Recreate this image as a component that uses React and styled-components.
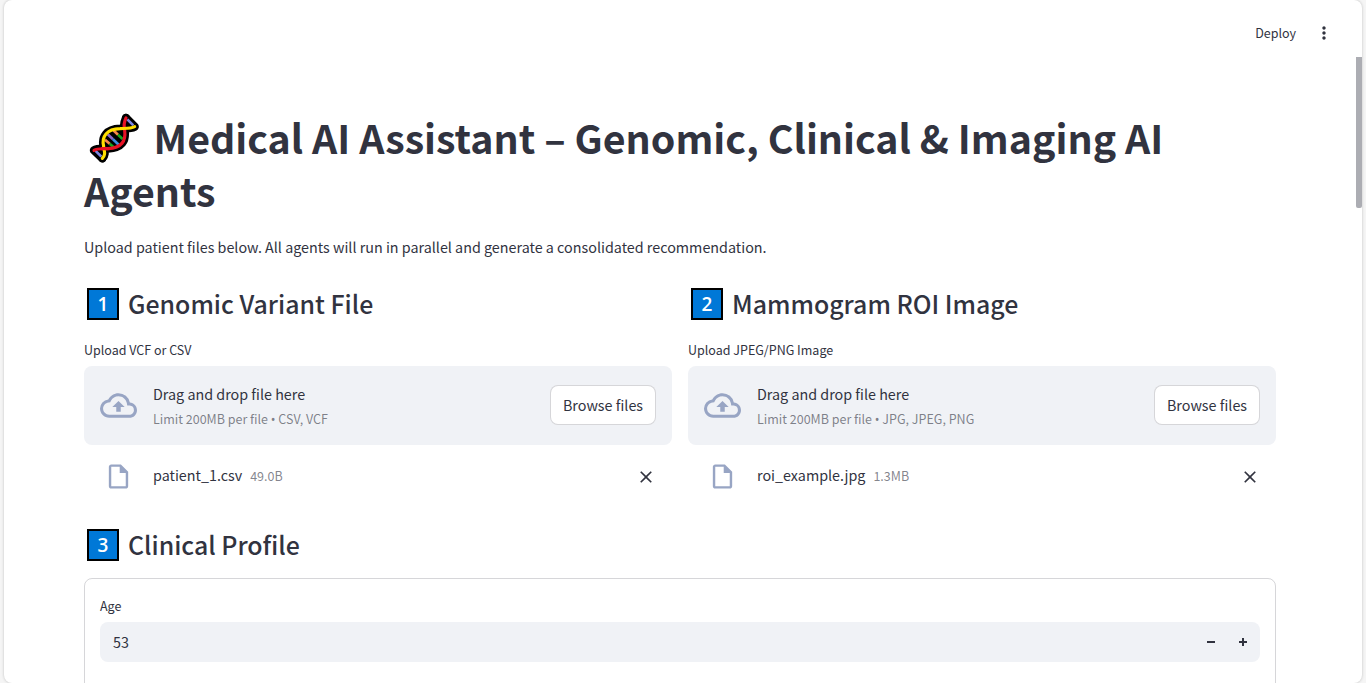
import React from "react";
import styled, { createGlobalStyle } from "styled-components";

const GlobalStyle = createGlobalStyle`
  *, *::before, *::after { box-sizing: border-box; }
  html, body { margin: 0; padding: 0; height: 100%; overflow: hidden; background: #f5f5f5; }
  body {
    font-family: "Noto Sans CJK SC", "Source Sans Pro", sans-serif;
    font-size: 14.33px;
    color: #31333f;
  }
`;

const Page = styled.div`
  height: 683px;
  padding: 0 4px 0 4px;
  overflow: hidden;
`;

const Panel = styled.main`
  height: 683px;
  background: #fff;
  border-radius: 8px;
  box-shadow: 0 0 3px rgba(0, 0, 0, 0.22);
  position: relative;
  overflow: hidden;
`;

const ScrollThumb = styled.div`
  position: absolute;
  top: 57px;
  right: 0;
  width: 6px;
  height: 151px;
  background: #acadb3;
  border-radius: 0 0 2px 2px;
`;

const Header = styled.header`
  height: 60px;
  padding: 6px 28px 0 0;
  display: flex;
  align-items: center;
  justify-content: flex-end;
  gap: 18px;
`;

const DeployButton = styled.button`
  border: 0;
  padding: 0;
  background: none;
  font: inherit;
  font-size: 12.5px;
  line-height: 20px;
  color: inherit;
`;

const Glyph = styled.svg`
  display: block;
  flex: none;
  width: ${(p) => p.$size}px;
  height: ${(p) => p.$size}px;
  fill: ${(p) => p.$color || "#31333f"};
`;

const Content = styled.div`
  padding: 50px 86px 0 80px;
`;

const Title = styled.h1`
  margin: 0;
  font-size: 39.35px;
  font-weight: 700;
  line-height: 53px;
  white-space: nowrap;
`;

const DnaIcon = styled.svg`
  width: 60px;
  height: 53px;
  margin-right: 9.6px;
  vertical-align: top;
`;

const Intro = styled.p`
  margin: 18px 0 15px;
  line-height: 26px;
`;

const Columns = styled.div`
  display: grid;
  grid-template-columns: 1fr 1fr;
  gap: 16px;
`;

const SectionTitle = styled.h2`
  margin: 0;
  height: 58px;
  padding-left: 3px;
  display: flex;
  align-items: center;
  gap: 9px;
  font-size: 24.9px;
  font-weight: 500;
  line-height: 34px;
  white-space: nowrap;
`;

const SectionText = styled.span`
  padding-bottom: 2px;
`;

const Keycap = styled.span`
  width: 32px;
  height: 32px;
  border: 2px solid #000;
  background: #0078d7;
  color: #fff;
  font: 600 19px/28px "Open Sans", sans-serif;
  text-align: center;
`;

const Upload = styled.section`
  margin: 7px 0;
`;

const Label = styled.div`
  font-size: 12.5px;
  line-height: 20px;
`;

const DropZone = styled.div`
  height: 79px;
  margin-top: 6px;
  padding: 0 16px;
  display: flex;
  align-items: center;
  background: #f0f2f6;
  border-radius: 8px;
`;

const DropText = styled.div`
  flex: 1;
  padding-left: 16px;
`;

const DropTitle = styled.div`
  line-height: 26px;
`;

const Small = styled.div`
  font-size: 12.5px;
  line-height: 23px;
  color: rgba(49, 51, 63, 0.6);
`;

const Bullet = styled.span`
  font-family: "Noto Sans", sans-serif;
  line-height: 1;
`;

const BrowseButton = styled.button`
  width: 106px;
  height: 40px;
  margin-bottom: 1px;
  padding: 0;
  border: 1px solid rgba(49, 51, 63, 0.2);
  border-radius: 8px;
  background: #fff;
  font: inherit;
  line-height: 26px;
  color: inherit;
`;

const FileRow = styled.div`
  height: 64px;
  padding: 0 16px 0 20px;
  display: flex;
  align-items: center;
`;

const FileIcon = styled(Glyph)`
  margin-bottom: 1px;
`;

const FileName = styled.div`
  padding: 0 0 4px 20px;
  margin-right: 8px;
  line-height: 26px;
`;

const FileSize = styled(Small)`
  flex: 1;
  padding-bottom: 3px;
`;

const ProfileForm = styled.form`
  height: 240px;
  margin-top: 4px;
  padding: 17px 15px;
  border: 1px solid rgba(49, 51, 63, 0.2);
  border-radius: 8px;
`;

const NumberField = styled.div`
  height: 40px;
  margin-top: 6px;
  padding: 0 13px;
  display: flex;
  align-items: center;
  gap: 24px;
  background: #f0f2f6;
  border-radius: 8px;
`;

const FieldValue = styled.span`
  flex: 1;
  line-height: 26px;
`;

const MUTED = "#98a5c4";

const Dna = () => (
  <DnaIcon viewBox="24 15 180 159" fill="none" strokeLinecap="round" strokeLinejoin="round">
    <g stroke="#000" strokeWidth="25">
      <path d="M150 39C142 55 143 64 146 76C150 108 138 128 96 131C78 132 64 130 54 136L79 160" />
      <path d="M79 160C89 150 86 142 83 127C76 95 92 72 132 71C152 70 164 71 176 65L150 39" />
    </g>
    <path d="M83 127C76 95 92 72 132 71L146 76C150 108 138 128 96 131Z" fill="#000" />
    <g strokeWidth="8" strokeLinecap="butt">
      <path d="M58 137L76 155M154 43L172 61" stroke="#7b86e2" />
      <path d="M87 104L101 116" stroke="#f7894a" />
      <path d="M101 116L113 127" stroke="#16a51d" />
      <path d="M95 88L111 103" stroke="#8967c8" />
      <path d="M111 103L128 119" stroke="#3d8de0" />
      <path d="M112 76L126 89" stroke="#f7894a" />
      <path d="M126 89L140 102" stroke="#16a51d" />
    </g>
    <path d="M150 39C142 55 143 64 146 76C150 108 138 128 96 131C78 132 64 130 54 136" stroke="#e81224" strokeWidth="9.5" />
    <path d="M79 160C89 150 86 142 83 127" stroke="#ffdf00" strokeWidth="9.5" />
    <path d="M83 124C76 95 92 72 132 71C152 70 164 71 176 65" stroke="#ffdf00" strokeWidth="9.5" />
    <path d="M78 131L96 131" stroke="#e81224" strokeWidth="9.5" />
  </DnaIcon>
);

const Uploader = ({ number, title, label, formats, file, size }) => (
  <div>
    <SectionTitle>
      <Keycap>{number}</Keycap>
      <SectionText>{title}</SectionText>
    </SectionTitle>
    <Upload>
      <Label>{label}</Label>
      <DropZone>
        <Glyph $size={37} $color={MUTED} viewBox="0 0 24 24">
          <path d="M19.35 10.04A7.49 7.49 0 0012 4C9.11 4 6.6 5.64 5.35 8.04A5.994 5.994 0 000 14c0 3.31 2.69 6 6 6h13c2.76 0 5-2.24 5-5 0-2.64-2.05-4.78-4.65-4.96zM19 18H6c-2.21 0-4-1.79-4-4 0-2.05 1.53-3.76 3.56-3.97l1.07-.11.5-.95A5.469 5.469 0 0112 6c2.62 0 4.88 1.86 5.39 4.43l.3 1.5 1.53.11A2.98 2.98 0 0122 15c0 1.65-1.35 3-3 3zM8 13h2.55v3h2.9v-3H16l-4-4z" />
        </Glyph>
        <DropText>
          <DropTitle>Drag and drop file here</DropTitle>
          <Small>
            Limit 200MB per file <Bullet>•</Bullet> {formats}
          </Small>
        </DropText>
        <BrowseButton>Browse files</BrowseButton>
      </DropZone>
      <FileRow>
        <FileIcon $size={29} $color={MUTED} viewBox="0 0 24 24">
          <path d="M14 2H6c-1.1 0-1.99.9-1.99 2L4 20c0 1.1.89 2 1.99 2H18c1.1 0 2-.9 2-2V8l-6-6zM6 20V4h7v5h5v11H6z" />
        </FileIcon>
        <FileName>{file}</FileName>
        <FileSize>{size}</FileSize>
        <Glyph $size={20} viewBox="0 0 24 24">
          <path d="M19 6.41L17.59 5 12 10.59 6.41 5 5 6.41 10.59 12 5 17.59 6.41 19 12 13.41 17.59 19 19 17.59 13.41 12z" />
        </Glyph>
      </FileRow>
    </Upload>
  </div>
);

export default function App() {
  return (
    <Page>
      <GlobalStyle />
      <Panel>
        <Header>
          <DeployButton>Deploy</DeployButton>
          <Glyph $size={20} viewBox="0 0 24 24">
            <path d="M12 8c1.1 0 2-.9 2-2s-.9-2-2-2-2 .9-2 2 .9 2 2 2zm0 2c-1.1 0-2 .9-2 2s.9 2 2 2 2-.9 2-2-.9-2-2-2zm0 6c-1.1 0-2 .9-2 2s.9 2 2 2 2-.9 2-2-.9-2-2-2z" />
          </Glyph>
        </Header>
        <Content>
          <Title>
            <Dna />
            Medical AI Assistant – Genomic, Clinical &amp; Imaging AI
            <br />
            Agents
          </Title>
          <Intro>
            Upload patient files below. All agents will run in parallel and generate a consolidated
            recommendation.
          </Intro>
          <Columns>
            <Uploader
              number="1"
              title="Genomic Variant File"
              label="Upload VCF or CSV"
              formats="CSV, VCF"
              file="patient_1.csv"
              size="49.0B"
            />
            <Uploader
              number="2"
              title="Mammogram ROI Image"
              label="Upload JPEG/PNG Image"
              formats="JPG, JPEG, PNG"
              file="roi_example.jpg"
              size="1.3MB"
            />
          </Columns>
          <SectionTitle>
            <Keycap>3</Keycap>
            <SectionText>Clinical Profile</SectionText>
          </SectionTitle>
          <ProfileForm>
            <Label>Age</Label>
            <NumberField>
              <FieldValue>53</FieldValue>
              <Glyph $size={8} viewBox="0 0 8 8">
                <path d="M0 3v2h8v-2h-8z" />
              </Glyph>
              <Glyph $size={8} viewBox="0 0 8 8">
                <path d="M3 0v3h-3v2h3v3h2v-3h3v-2h-3v-3h-2z" />
              </Glyph>
            </NumberField>
          </ProfileForm>
        </Content>
        <ScrollThumb />
      </Panel>
    </Page>
  );
}
